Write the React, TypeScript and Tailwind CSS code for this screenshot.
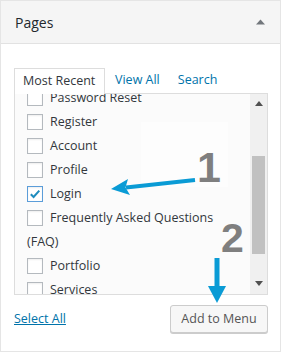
import { useState } from 'react';

const pages = [
  { id: 'password-reset', label: 'Password Reset' },
  { id: 'register', label: 'Register' },
  { id: 'account', label: 'Account' },
  { id: 'profile', label: 'Profile' },
  { id: 'login', label: 'Login' },
  { id: 'faq', label: 'Frequently Asked Questions', wrap: '(FAQ)' },
  { id: 'portfolio', label: 'Portfolio' },
  { id: 'services', label: 'Services' },
];

function Checkbox({ checked, onChange }: { checked: boolean; onChange: () => void }) {
  return (
    <button
      onClick={onChange}
      className={`w-4 h-4 shrink-0 bg-white border flex items-center justify-center shadow-[inset_0_1px_2px_rgba(0,0,0,0.07)] ${checked ? 'border-[#5b9dd9]' : 'border-[#b4b9be]'}`}
    >
      {checked && (
        <svg width="12" height="12" viewBox="0 0 12 12">
          <path d="M1.8 6.2 L4.6 9 L10.3 2.6" fill="none" stroke="#1e8cbe" strokeWidth="2" />
        </svg>
      )}
    </button>
  );
}

export default function App() {
  const [checked, setChecked] = useState<Record<string, boolean>>({ login: true });
  const toggle = (id: string) => setChecked(c => ({ ...c, [id]: !c[id] }));

  return (
    <div
      className="relative w-[281px] h-[352px] border border-[#e5e5e5] bg-white text-[#32373c] overflow-hidden"
      style={{ fontFamily: '"Open Sans", "Noto Sans", sans-serif' }}
    >
      <div className="h-[43px] bg-[#f5f5f5] border-b border-[#e2e2e2] pl-[14px] pr-[15px] flex items-center justify-between">
        <span className="text-[14px] text-[#23282d]">Pages</span>
        <svg width="9" height="6" viewBox="0 0 9 6">
          <path d="M0 5.5 L4.5 0.5 L9 5.5 Z" fill="#72777c" />
        </svg>
      </div>

      <div className="pl-[13px] pr-[12px] pt-[24px]">
        <div className="flex items-end h-[25px] text-[12.5px]">
          <div className="relative z-10 -mb-px h-[26px] w-[91px] pl-[8px] flex items-center bg-white border-t border-l border-r border-[#dddddd] text-[#32373c]">
            Most Recent
          </div>
          <a className="h-[25px] ml-[10px] flex items-center text-[#0073aa]">View All</a>
          <a className="h-[25px] ml-[18px] flex items-center text-[#0073aa]">Search</a>
        </div>

        <div className="h-[202px] border border-[#dddddd] bg-[#fbfbfb] flex overflow-hidden">
          <div className="flex-1 overflow-hidden pl-[12px] text-[12.5px]">
            <div className="-mt-[8px]">
              {pages.map(p => (
                <div key={p.id}>
                  <div className="h-6 flex items-center gap-[7px]">
                    <Checkbox checked={!!checked[p.id]} onChange={() => toggle(p.id)} />
                    <span>{p.label}</span>
                  </div>
                  {p.wrap && <div className="h-6 flex items-center">{p.wrap}</div>}
                </div>
              ))}
            </div>
          </div>
          <div className="w-[17px] bg-[#f0f0f0] flex flex-col items-center">
            <svg width="8" height="5" viewBox="0 0 8 5" className="mt-[7px]">
              <path d="M0 5 L4 0 L8 5 Z" fill="#505050" />
            </svg>
            <div className="mt-[50px] w-[13px] h-[98px] bg-[#c1c1c1]" />
            <svg width="8" height="5" viewBox="0 0 8 5" className="mt-auto mb-[8px]">
              <path d="M0 0 L4 5 L8 0 Z" fill="#505050" />
            </svg>
          </div>
        </div>

        <div className="mt-[10px] flex items-center justify-between">
          <a className="text-[12.5px] text-[#0073aa] underline">Select All</a>
          <button className="h-[28px] w-[98px] rounded-[3px] border border-[#cccccc] bg-[#f7f7f7] shadow-[0_1px_0_#cccccc] text-[12.5px] text-[#555555]">
            Add to Menu
          </button>
        </div>
      </div>

      <svg className="absolute left-0 top-0 pointer-events-none" width="281" height="352" viewBox="0 0 281 352">
        <rect x="140" y="121" width="87" height="65" fill="#ffffff" opacity="0.6" />
        <line x1="194" y1="179" x2="125" y2="186.5" stroke="#0a9bd5" strokeWidth="4" />
        <path d="M110 188 L127 178 L124.5 186.5 L129 194 Z" fill="#0a9bd5" />
        <text x="196" y="181" fontFamily='"Liberation Sans", Arial, sans-serif' fontWeight="700" fontSize="43" fill="#7f7f7f">1</text>
        <text x="220" y="251" fontFamily='"Liberation Sans", Arial, sans-serif' fontWeight="700" fontSize="41" fill="#7f7f7f">2</text>
        <line x1="216" y1="257" x2="216" y2="288" stroke="#0a9bd5" strokeWidth="5" />
        <path d="M207 285 L225 285 L216 302 Z" fill="#0a9bd5" />
      </svg>
    </div>
  );
}
